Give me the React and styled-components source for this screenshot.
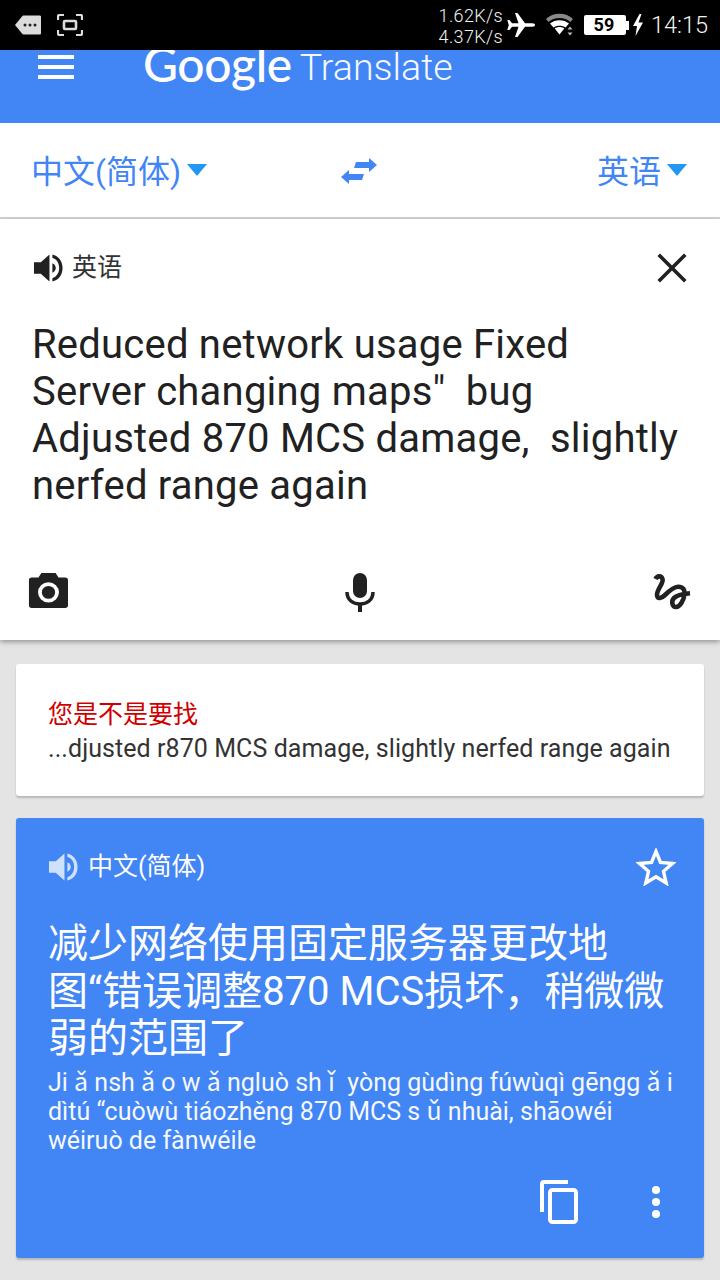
import React from "react";
import styled, { createGlobalStyle } from "styled-components";

const CJK = `Roboto, "Noto Sans CJK SC", sans-serif`;

const Global = createGlobalStyle`
  html, body { margin: 0; padding: 0; background: #e4e4e4; }
  * { box-sizing: border-box; }
  body { font-family: ${CJK}; }
`;

const Page = styled.div`
  width: 720px;
  height: 1280px;
  overflow: hidden;
  display: flex;
  flex-direction: column;
  background: #e4e4e4;
`;

const StatusBar = styled.div`
  height: 50px;
  background: #000;
  display: flex;
  align-items: center;
  padding: 0 12px 0 14px;
  color: #f2f2f2;
  flex: none;
`;
const StatusLeft = styled.div`
  display: flex;
  align-items: center;
  gap: 15px;
  flex: 1;
`;
const Speed = styled.div`
  font-size: 18px;
  line-height: 21px;
  text-align: right;
  width: 66px;
  margin-right: 3px;
  margin-top: 1px;
  font-weight: 300;
  letter-spacing: 0.35px;
`;
const BatteryBody = styled.div`
  width: 42px;
  height: 20px;
  background: #fff;
  border-radius: 2px;
  color: #000;
  font-size: 18px;
  font-weight: 700;
  line-height: 20px;
  text-align: center;
  margin-left: 9px;
  padding-right: 2px;
  position: relative;
  &::after {
    content: "";
    position: absolute;
    right: -3px;
    top: 6px;
    width: 3px;
    height: 9px;
    background: #fff;
  }
`;
const Clock = styled.div`
  font-size: 23.5px;
  line-height: 28px;
  margin-left: 8px;
  font-weight: 300;
`;

const Header = styled.header`
  height: 73px;
  flex: none;
  background: #4285f4;
  overflow: hidden;
  display: flex;
  align-items: flex-start;
  padding-left: 38px;
  color: #fff;
`;
const Burger = styled.div`
  width: 36px;
  margin-top: 5px;
  display: flex;
  flex-direction: column;
  gap: 6px;
  & > span { display: block; height: 4px; background: #fff; }
`;
const Logo = styled.div`
  margin-left: 69px;
  margin-top: -14px;
  display: flex;
  align-items: baseline;
  line-height: 56px;
  white-space: nowrap;
`;
const LogoGoogle = styled.span`
  font-family: Lato, sans-serif;
  font-size: 48px;
  font-weight: 500;
  letter-spacing: -0.4px;
`;
const LogoTranslate = styled.span`
  font-family: Roboto, sans-serif;
  font-size: 37.6px;
  font-weight: 300;
  margin-left: 8px;
  opacity: 0.95;
  transform: translateY(-2px);
`;

const LangBar = styled.div`
  height: 96px;
  flex: none;
  background: #fff;
  border-bottom: 2px solid #d4d4d4;
  display: grid;
  grid-template-columns: 1fr 56px 1fr;
  align-items: center;
  padding: 0 33px 0 31px;
`;
const LangButton = styled.div`
  display: flex;
  align-items: center;
  justify-content: ${(p) => (p.$end ? "flex-end" : "flex-start")};
  gap: 6px;
  color: #4285f4;
  font-size: 32px;
  line-height: 40px;
  margin-top: 3px;
`;
const Caret = styled.span`
  width: 0;
  height: 0;
  border-left: 10.5px solid transparent;
  border-right: 10.5px solid transparent;
  border-top: 12px solid #2196f3;
  margin-top: -4px;
`;
const Swap = styled.div`
  display: flex;
  justify-content: center;
  margin-top: 1px;
`;

const SourcePanel = styled.section`
  height: 421px;
  flex: none;
  background: #fff;
  box-shadow: 0 2px 5px rgba(0, 0, 0, 0.35);
  display: flex;
  flex-direction: column;
  padding: 0 27px 0 33px;
  position: relative;
`;
const PanelHead = styled.div`
  display: flex;
  align-items: center;
  height: 40px;
  margin-top: 29px;
  color: ${(p) => (p.$light ? "#fff" : "#333")};
  font-size: 25px;
`;
const HeadLabel = styled.span`
  margin-left: ${(p) => p.$gap}px;
  flex: 1;
  line-height: 40px;
`;
const SourceText = styled.div`
  margin: 33px 0 0 -1px;
  font-size: 40px;
  line-height: 47px;
  color: #212121;
  white-space: pre;
  letter-spacing: 0.22px;
`;
const ToolRow = styled.div`
  margin-top: auto;
  margin-bottom: 28px;
  margin-left: -5px;
  margin-right: 1px;
  display: flex;
  justify-content: space-between;
  align-items: center;
  height: 40px;
`;

const Feed = styled.main`
  display: flex;
  flex-direction: column;
  gap: 22px;
  padding: 24px 16px 0;
`;
const SuggestCard = styled.div`
  height: 132px;
  background: #fff;
  border-radius: 3px;
  box-shadow: 0 2px 2px rgba(0, 0, 0, 0.2);
  padding: 34px 32px 0;
`;
const SuggestTitle = styled.div`
  color: #d00000;
  font-size: 25px;
  line-height: 34px;
`;
const SuggestText = styled.div`
  color: #333;
  font-size: 25px;
  line-height: 34px;
  white-space: nowrap;
  letter-spacing: 0.07px;
`;
const ResultCard = styled.div`
  height: 440px;
  background: #4285f4;
  border-radius: 3px;
  box-shadow: 0 2px 2px rgba(0, 0, 0, 0.2);
  padding: 0 28px 0 32px;
  display: flex;
  flex-direction: column;
  color: #fff;
`;
const ResultText = styled.div`
  margin-top: 33px;
  font-size: 40px;
  line-height: 47.5px;
  white-space: pre;
  font-family: ${CJK};
`;
const Pinyin = styled.div`
  font-size: 25px;
  line-height: 29px;
  white-space: pre;
  margin-top: 5px;
  color: #fff;
  opacity: 0.95;
`;
const CardActions = styled.div`
  margin-top: auto;
  margin-bottom: 34px;
  display: flex;
  justify-content: flex-end;
  align-items: center;
  gap: 74px;
  padding-right: 16px;
`;

const Speaker = ({ color }) => (
  <svg width="31" height="30" viewBox="0 0 32 30">
    <path d="M1 9h7l9-8v28l-9-8H1z" fill={color} />
    <path d="M20 10c2.500 1.500 3.500 3 3.500 5s-1 3.500-3.500 5z" fill={color} />
    <path d="M20 1c6.500 1.500 10.500 7 10.500 14S26.500 27.500 20 29v-3.500c4.500-1.500 7-5.500 7-10.500s-2.500-9-7-10.500z" fill={color} />
  </svg>
);

export default function App() {
  return (
    <Page>
      <Global />
      <StatusBar>
        <StatusLeft>
          <svg width="28" height="22" viewBox="0 0 28 22">
            <path d="M1 11 8 2.500C8.500 2 9 1.500 10 1.500h15.500c1 0 1.500.5 1.500 1.500v16c0 1-.5 1.500-1.500 1.500H10c-1 0-1.500-.5-2-1z" fill="#dcdcdc" />
            <circle cx="11" cy="11" r="1.500" fill="#222" /><circle cx="16" cy="11" r="1.500" fill="#222" /><circle cx="21" cy="11" r="1.500" fill="#222" />
          </svg>
          <svg width="26" height="22" viewBox="0 0 26 22" fill="none" stroke="#dcdcdc" strokeWidth="2.200">
            <path d="M1 6V2.500C1 1.800 1.500 1 2.500 1H7M19 1h4.500c1 0 1.500.8 1.500 1.500V6M1 16v3.500c0 .7.5 1.500 1.500 1.500H7M19 21h4.500c1 0 1.500-.8 1.500-1.500V16" />
            <rect x="7" y="7" width="12" height="8" rx="1" strokeWidth="2.600" />
          </svg>
        </StatusLeft>
        <Speed>1.62K/s<br />4.37K/s</Speed>
        <svg width="30" height="26" viewBox="0 0 30 26">
          <path d="M29 13c0-1-1-1.700-2.500-1.700h-7.500L11.500 1H9l3.500 10.300H6L3.500 8H1.300l1.500 5-1.500 5h2.200L6 14.700h6.500L9 25h2.500L19 14.700h7.500c1.500 0 2.500-.7 2.500-1.700z" fill="#fff" />
        </svg>
        <svg width="30" height="26" viewBox="0 0 30 26" style={{ marginLeft: 9 }}>
          <path d="M1 7C8 0 21 0 28 7l-2.500 3C20 4.500 9 4.500 3.500 10z" fill="#8a8a8a" />
          <path d="M5 11.500c5-4.500 14-4.500 19 0l-3.500 4c-3-2.500-9-2.500-12 0z" fill="#fff" />
          <path d="M9.700 16.500c2.500-2 7-2 9.600 0l-4.800 6z" fill="#fff" />
          <path d="M22.500 17.500l2.500-3 2.500 3zM22.500 20.500h5l-2.500 3z" fill="#bbb" />
        </svg>
        <BatteryBody>59</BatteryBody>
        <svg width="10" height="22" viewBox="0 0 10 22" style={{ marginLeft: 7 }}>
          <path d="M6.500 0 0 12h4l-1.500 10L10 8.500H5.500L8.500 0z" fill="#fff" />
        </svg>
        <Clock>14:15</Clock>
      </StatusBar>

      <Header>
        <Burger><span /><span /><span /></Burger>
        <Logo>
          <LogoGoogle>Google</LogoGoogle>
          <LogoTranslate>Translate</LogoTranslate>
        </Logo>
      </Header>

      <LangBar>
        <LangButton>中文(简体)<Caret /></LangButton>
        <Swap>
          <svg width="36" height="26" viewBox="0 0 36 26">
            <path d="M28 0l8 7-8 7v-4H13l2-6h13zM8 12v4h15l-2 6H8v4l-8-7z" fill="#4285f4" />
          </svg>
        </Swap>
        <LangButton $end>英语<Caret /></LangButton>
      </LangBar>

      <SourcePanel>
        <PanelHead>
          <Speaker color="#212121" />
          <HeadLabel $gap={8}>英语</HeadLabel>
          <svg width="30" height="30" viewBox="0 0 30 30" style={{ marginRight: 6 }}>
            <path d="M3 3l24 24M27 3 3 27" stroke="#212121" strokeWidth="3.600" strokeLinecap="square" fill="none" />
          </svg>
        </PanelHead>
        <SourceText>{`Reduced network usage Fixed
Server changing maps"  bug
Adjusted 870 MCS damage,  slightly
nerfed range again`}</SourceText>
        <ToolRow>
          <svg width="40" height="37" viewBox="0 0 42 40" preserveAspectRatio="none" style={{ marginTop: -3 }}>
            <path d="M13 1h15l3 5h7c2 0 3 1 3 3v27c0 2-1 3-3 3H3c-2 0-3-1-3-3V9c0-2 1-3 3-3h7z" fill="#212121" transform="translate(1 0)" />
            <circle cx="21.500" cy="22" r="9" fill="none" stroke="#fff" strokeWidth="4" />
          </svg>
          <svg width="30" height="40" viewBox="0 0 30 40">
            <rect x="8" y="1" width="14" height="25" rx="7" fill="#212121" />
            <path d="M2 20c0 8 6 12 13 12s13-4 13-12" fill="none" stroke="#212121" strokeWidth="3.500" />
            <rect x="13" y="31" width="4" height="9" fill="#212121" />
          </svg>
          <svg width="40" height="40" viewBox="0 0 40 40" fill="none">
            <path d="M3.500 7C5 4 9 3 10.500 7C12 11 5 17 5 23C5 28 10 26 13 23C17 19 21 15 26 14.700C31 14.500 33 18 32.500 22C32 28 28 35 24 35C20 35 19 29 22 26C25 23 31 22 38 21.300" stroke="#212121" strokeWidth="4.600" />
          </svg>
        </ToolRow>
      </SourcePanel>

      <Feed>
        <SuggestCard>
          <SuggestTitle>您是不是要找</SuggestTitle>
          <SuggestText>...djusted r870 MCS damage, slightly nerfed range again</SuggestText>
        </SuggestCard>
        <ResultCard>
          <PanelHead $light>
            <Speaker color="#d0e1fc" />
            <HeadLabel $gap={9}>中文(简体)</HeadLabel>
            <svg width="40" height="38" viewBox="0 0 40 38">
              <path d="M20 3.500 24.500 14.500 36.500 15.500 27.500 23.300 30.200 35 20 28.800 9.800 35 12.500 23.300 3.500 15.500 15.500 14.500z" fill="none" stroke="#fff" strokeWidth="3.400" />
            </svg>
          </PanelHead>
          <ResultText>{`减少网络使用固定服务器更改地
图“错误调整870 MCS损坏，稍微微
弱的范围了`}</ResultText>
          <Pinyin>{`Ji ǎ nsh ǎ o w ǎ ngluò sh ǐ  yòng gùdìng fúwùqì gēngg ǎ i
dìtú “cuòwù tiáozhěng 870 MCS s ǔ nhuài, shāowéi
wéiruò de fànwéile`}</Pinyin>
          <CardActions>
            <svg width="38" height="44" viewBox="0 0 38 44">
              <path d="M28 2H4C2.500 2 2 2.500 2 4v28" fill="none" stroke="#fff" strokeWidth="4" />
              <rect x="10" y="10" width="26" height="32" rx="2.500" fill="none" stroke="#fff" strokeWidth="4" />
            </svg>
            <svg width="8" height="32" viewBox="0 0 8 32">
              <circle cx="4" cy="4" r="4" fill="#fff" /><circle cx="4" cy="16" r="4" fill="#fff" /><circle cx="4" cy="28" r="4" fill="#fff" />
            </svg>
          </CardActions>
        </ResultCard>
      </Feed>
    </Page>
  );
}
